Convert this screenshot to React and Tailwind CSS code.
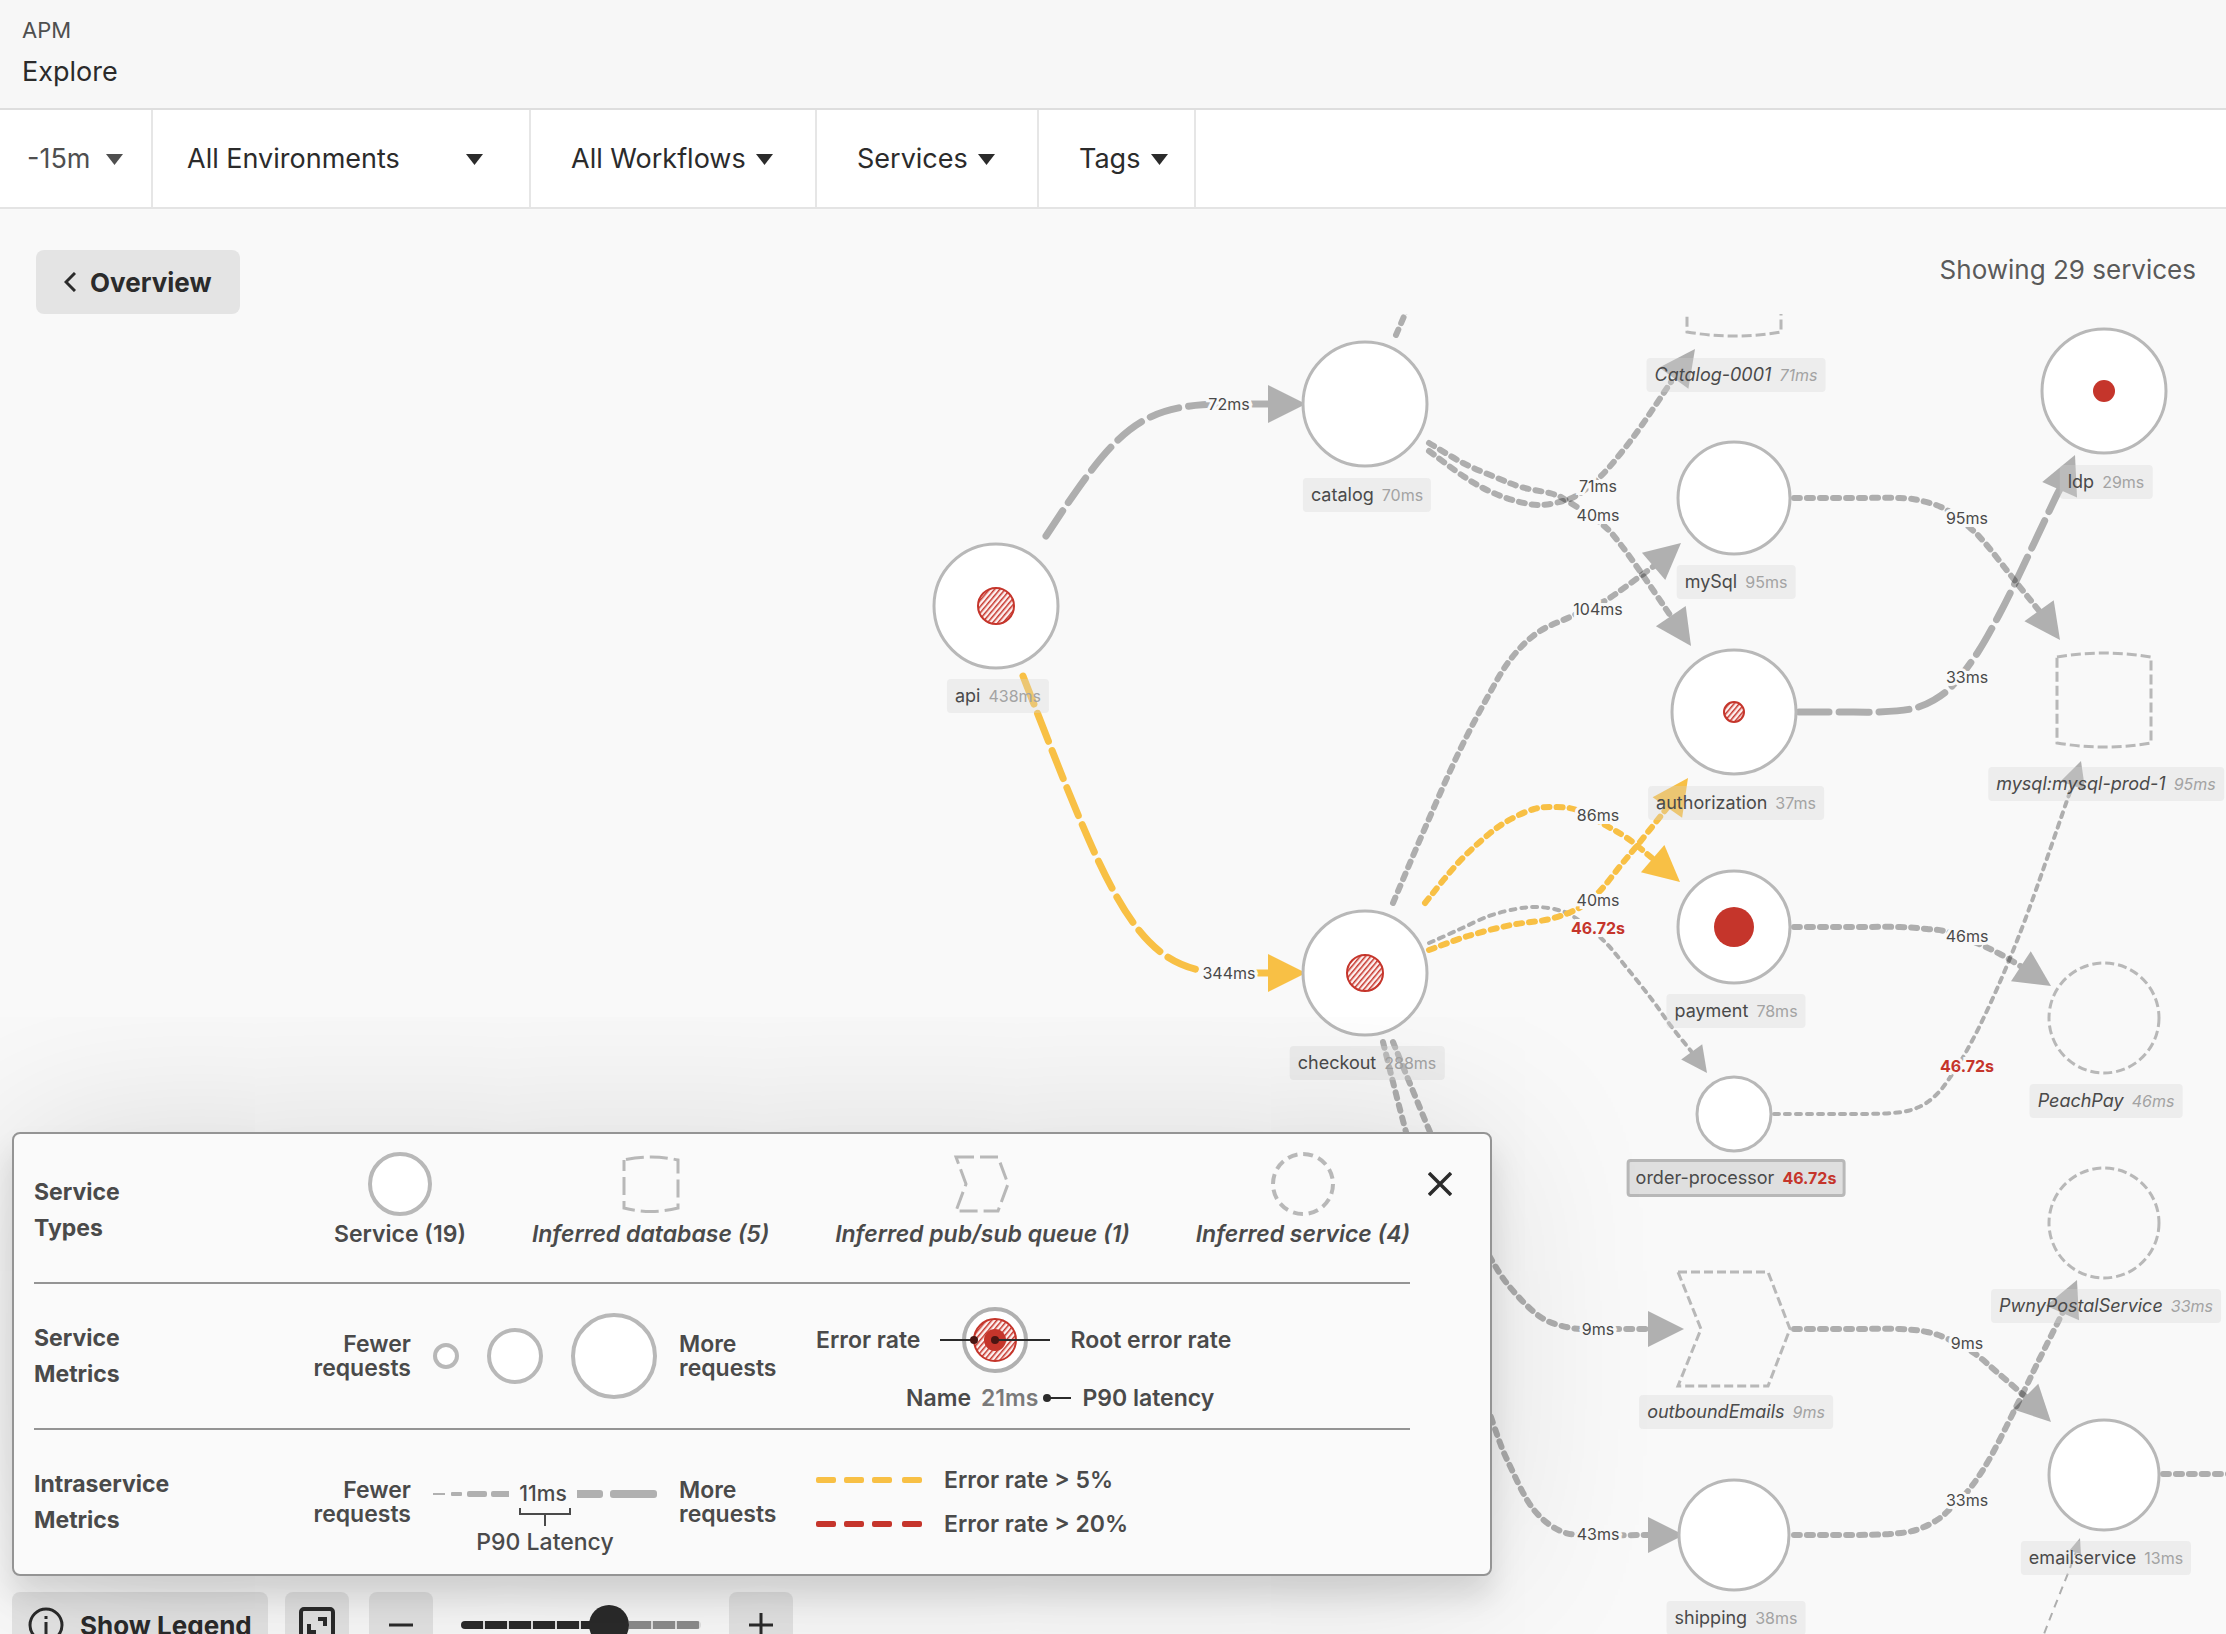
import React from "react";

const GRAY = "#b0b0b0";
const YELLOW = "#f8c045";
const RED = "#c5352b";

/* Offset that brings map coordinates into the visible part of the canvas. */
const PAN = { x: 0, y: -314 };

/* Line styles, from few requests to many. */
const WEIGHTS = {
  hair: { width: 2, dash: "8 6", cap: "butt", arrow: 15, half: 6 },
  thin: { width: 4, dash: "5 6", cap: "round", arrow: 26, half: 13 },
  mid: { width: 6, dash: "6 7", cap: "round", arrow: 36, half: 18 },
  wide: { width: 7, dash: "30 10", cap: "round", arrow: 38, half: 19 },
};

const EDGES = [
  { w: "wide", d: "M1046 536C1118 426 1140 404 1229 404", pts: [[1269, 404]], tip: [1306, 404], solid: 1251, label: "72ms", at: [1229, 404] },
  { w: "wide", c: YELLOW, d: "M1023 676C1112 905 1137 973 1229 973", pts: [[1269, 973]], tip: [1306, 973], solid: 1251, label: "344ms", at: [1229, 973] },
  { w: "mid", pts: [[1396, 335], [1405, 314], [1412, 296]] },
  { w: "mid", pts: [[1429, 451], [1463, 476], [1489, 491], [1516, 501], [1540, 505], [1563, 501], [1579, 494], [1600, 477], [1621, 453], [1642, 425], [1671, 382]], tip: [1695, 349], label: "71ms", at: [1598, 486] },
  { w: "mid", pts: [[1429, 443], [1463, 463], [1495, 477], [1521, 487], [1553, 494], [1569, 502], [1603, 525], [1621, 545], [1642, 574], [1670, 615]], tip: [1691, 646], label: "40ms", at: [1598, 515] },
  { w: "mid", pts: [[1393, 903], [1425, 828], [1458, 754], [1487, 698], [1510, 660], [1537, 633], [1570, 617], [1603, 602], [1628, 585], [1654, 566]], tip: [1681, 543], label: "104ms", at: [1598, 609] },
  { w: "mid", c: YELLOW, pts: [[1425, 903], [1458, 863], [1489, 834], [1511, 819], [1534, 809], [1553, 807], [1577, 810], [1605, 825], [1627, 838], [1652, 858]], tip: [1680, 882], label: "86ms", at: [1598, 815] },
  { w: "thin", pts: [[1429, 943], [1458, 930], [1489, 916], [1516, 909], [1537, 907], [1558, 910], [1574, 917], [1603, 940], [1627, 968], [1653, 1001], [1671, 1026], [1691, 1051]], tip: [1707, 1073], label: "46.72s", alert: true, at: [1598, 928] },
  { w: "mid", c: YELLOW, pts: [[1429, 950], [1468, 936], [1511, 925], [1550, 919], [1579, 908], [1599, 892], [1621, 865], [1640, 842], [1667, 808]], tip: [1688, 778], label: "40ms", at: [1598, 900] },
  { w: "mid", pts: [[1393, 1042], [1430, 1132], [1462, 1204], [1494, 1264], [1515, 1293], [1542, 1318], [1571, 1328], [1598, 1329], [1648, 1329]], tip: [1684, 1329], label: "9ms", at: [1598, 1329] },
  { w: "mid", pts: [[1383, 1042], [1406, 1132], [1450, 1290], [1493, 1423], [1511, 1468], [1534, 1510], [1563, 1532], [1598, 1535], [1648, 1535]], tip: [1684, 1535], label: "43ms", at: [1598, 1534] },
  { w: "mid", pts: [[1794, 498], [1850, 498], [1900, 498], [1922, 501], [1945, 509], [1969, 527], [1985, 543], [2016, 582], [2040, 612]], tip: [2060, 640], label: "95ms", at: [1967, 518] },
  { w: "wide", pts: [[1799, 712], [1840, 712], [1878, 712], [1911, 709], [1934, 700], [1954, 684], [1978, 652], [1999, 615], [2018, 577], [2053, 503], [2060, 489]], tip: [2075, 455], label: "33ms", at: [1967, 677] },
  { w: "mid", pts: [[1794, 927], [1850, 927], [1900, 927], [1927, 929], [1948, 932], [1979, 944], [2000, 954], [2022, 967]], tip: [2051, 986], label: "46ms", at: [1967, 936] },
  { w: "thin", pts: [[1774, 1114], [1840, 1114], [1893, 1113], [1919, 1107], [1937, 1094], [1951, 1076], [1966, 1052], [1985, 1015], [2008, 963], [2032, 901], [2070, 792], [2073, 785]], tip: [2081, 761], label: "46.72s", alert: true, at: [1967, 1066] },
  { w: "mid", pts: [[1794, 1329], [1850, 1329], [1900, 1329], [1927, 1332], [1948, 1339], [1974, 1353], [1998, 1373], [2027, 1398]], tip: [2051, 1422], label: "9ms", at: [1967, 1343] },
  { w: "mid", pts: [[1794, 1535], [1850, 1535], [1890, 1534], [1916, 1530], [1937, 1520], [1951, 1508], [1968, 1491], [1990, 1458], [2022, 1395], [2038, 1362], [2063, 1312]], tip: [2077, 1280], label: "33ms", at: [1967, 1500] },
  { w: "mid", pts: [[2163, 1474], [2300, 1474]] },
  { w: "hair", pts: [[2036, 1660], [2044, 1634], [2072, 1563], [2076, 1550]], tip: [2080, 1538] },
];

const NODES = [
  { name: "api", ms: "438ms", x: 996, y: 606, r: 62, kind: "service", hatch: 18, labelY: 679 },
  { name: "catalog", ms: "70ms", x: 1365, y: 404, r: 62, kind: "service", labelY: 478 },
  { name: "checkout", ms: "288ms", x: 1365, y: 973, r: 62, kind: "service", hatch: 18, labelY: 1046 },
  { name: "Catalog-0001", ms: "71ms", x: 1734, y: 289, kind: "database", labelY: 358 },
  { name: "mySql", ms: "95ms", x: 1734, y: 498, r: 56, kind: "service", labelY: 565 },
  { name: "authorization", ms: "37ms", x: 1734, y: 712, r: 62, kind: "service", hatch: 10, labelY: 786 },
  { name: "payment", ms: "78ms", x: 1734, y: 927, r: 56, kind: "service", dot: 20, labelY: 994 },
  { name: "order-processor", ms: "46.72s", x: 1734, y: 1114, r: 37, kind: "service", selected: true, labelY: 1159 },
  { name: "outboundEmails", ms: "9ms", x: 1734, y: 1329, kind: "queue", labelY: 1395 },
  { name: "shipping", ms: "38ms", x: 1734, y: 1535, r: 55, kind: "service", labelY: 1601 },
  { name: "ldp", ms: "29ms", x: 2104, y: 391, r: 62, kind: "service", dot: 11, labelY: 465 },
  { name: "mysql:mysql-prod-1", ms: "95ms", x: 2104, y: 700, kind: "database", labelY: 767 },
  { name: "PeachPay", ms: "46ms", x: 2104, y: 1018, r: 55, kind: "inferred", labelY: 1084 },
  { name: "PwnyPostalService", ms: "33ms", x: 2104, y: 1223, r: 55, kind: "inferred", labelY: 1289 },
  { name: "emailservice", ms: "13ms", x: 2104, y: 1475, r: 55, kind: "service", labelY: 1541 },
];

/* Smooth curve through a list of points. */
function curve(pts) {
  let d = `M${pts[0][0]} ${pts[0][1]}`;
  for (let i = 0; i < pts.length - 1; i++) {
    const p0 = pts[i - 1] || pts[i];
    const p1 = pts[i];
    const p2 = pts[i + 1];
    const p3 = pts[i + 2] || p2;
    d += `C${p1[0] + (p2[0] - p0[0]) / 6} ${p1[1] + (p2[1] - p0[1]) / 6} ${p2[0] - (p3[0] - p1[0]) / 6} ${p2[1] - (p3[1] - p1[1]) / 6} ${p2[0]} ${p2[1]}`;
  }
  return d;
}

function arrowHead(from, tip, length, half) {
  const dx = tip[0] - from[0];
  const dy = tip[1] - from[1];
  const n = Math.hypot(dx, dy);
  const ux = dx / n;
  const uy = dy / n;
  const bx = tip[0] - ux * length;
  const by = tip[1] - uy * length;
  return `M${tip[0]} ${tip[1]}L${bx - uy * half} ${by + ux * half}L${bx + uy * half} ${by - ux * half}Z`;
}

function Edge({ edge }) {
  const style = WEIGHTS[edge.w];
  const last = edge.pts[edge.pts.length - 1];
  return (
    <g>
      <path
        d={edge.d || curve(edge.pts)}
        fill="none"
        stroke={edge.c || "#000"}
        strokeOpacity={edge.c ? 1 : 0.3}
        strokeWidth={style.width}
        strokeDasharray={style.dash}
        strokeLinecap={style.cap}
      />
      {edge.solid && (
        <path d={`M${edge.solid} ${last[1]}H${last[0] + 1}`} stroke={edge.c || GRAY} strokeWidth="7" />
      )}
      {edge.tip && <path d={arrowHead(last, edge.tip, style.arrow, style.half)} fill={edge.c || GRAY} />}
    </g>
  );
}

function NodeShape({ node }) {
  const { x, y, r, kind } = node;
  if (kind === "database") {
    return (
      <path
        d={`M${x - 47} ${y - 43}Q${x} ${y - 51} ${x + 47} ${y - 43}V${y + 43}Q${x} ${y + 51} ${x - 47} ${y + 43}Z`}
        fill="none" stroke="#b8b8b8" strokeWidth="3" strokeDasharray="10 4"
      />
    );
  }
  if (kind === "queue") {
    return (
      <path
        d={`M${x - 56} ${y - 57}H${x + 34}L${x + 56} ${y}L${x + 34} ${y + 57}H${x - 56}L${x - 33} ${y}Z`}
        fill="none" stroke="#b8b8b8" strokeWidth="3" strokeDasharray="9 4"
      />
    );
  }
  return (
    <g>
      <circle
        cx={x} cy={y} r={r}
        fill={kind === "service" ? "#fff" : "none"}
        stroke="#b8b8b8" strokeWidth="3"
        strokeDasharray={kind === "inferred" ? "9 4" : undefined}
      />
      {node.hatch && <circle cx={x} cy={y} r={node.hatch} fill="url(#hatch)" stroke={RED} strokeWidth="2" />}
      {node.dot && <circle cx={x} cy={y} r={node.dot} fill={RED} />}
    </g>
  );
}

function NodeLabel({ node }) {
  const italic = node.kind !== "service";
  return (
    <div
      className={
        "absolute flex -translate-x-1/2 items-baseline gap-2 whitespace-nowrap rounded text-lg " +
        (node.selected
          ? "border-3 border-[#b8b8b8] bg-[#dfdfdf] px-1.5 leading-8 "
          : "bg-[#d2d2d2]/32 px-2 leading-[34px] ") +
        (italic ? "italic" : "")
      }
      style={{ left: node.x + 2, top: node.labelY }}
    >
      <span className="text-[#4a4a4a]">{node.name}</span>
      <span className={"text-base " + (node.selected ? "font-bold text-[#c5352b]" : "text-[#a3a3a3]")}>{node.ms}</span>
    </div>
  );
}

function ServiceMap() {
  return (
    <div className="absolute inset-0" style={{ transform: `translate(${PAN.x}px, ${PAN.y}px)` }}>
      <svg className="absolute inset-0 h-full w-full overflow-visible" role="img" aria-label="Service map">
        <defs>
          <pattern id="hatch" width="4" height="4" patternUnits="userSpaceOnUse" patternTransform="rotate(40)">
            <rect width="4" height="4" fill="#fdf0ef" />
            <rect width="1.5" height="4" fill={RED} />
          </pattern>
        </defs>
        {EDGES.map((edge, i) => (
          <Edge key={i} edge={edge} />
        ))}
        {NODES.map((node) => (
          <NodeShape key={node.name} node={node} />
        ))}
        {EDGES.filter((edge) => edge.label).map((edge, i) => (
          <text
            key={i}
            x={edge.at[0]}
            y={edge.at[1] + 6}
            textAnchor="middle"
            className="text-base"
            fontWeight={edge.alert ? 700 : 400}
            fill={edge.alert ? RED : "#4a4a4a"}
            stroke="#f9f9f9"
            strokeWidth="6"
            paintOrder="stroke"
          >
            {edge.label}
          </text>
        ))}
      </svg>
      {NODES.map((node) => (
        <NodeLabel key={node.name} node={node} />
      ))}
    </div>
  );
}

function Caret() {
  return (
    <svg width="17" height="11" viewBox="0 0 17 11" className="shrink-0" aria-hidden="true">
      <path d="M0 0H17L8.5 11Z" fill="currentColor" />
    </svg>
  );
}

function Filter({ label, name, className }) {
  return (
    <label className={"flex items-center gap-2.5 border-r-2 border-[#e6e6e6] pt-0.5 " + className}>
      <select aria-label={name} className="appearance-none bg-transparent text-[27px] outline-none">
        <option>{label}</option>
      </select>
      <Caret />
    </label>
  );
}

function Section({ title, children, last }) {
  return (
    <section className={"flex " + (last ? "h-36" : "h-[146px] border-b-2 border-[#949494]")}>
      <h2 className="flex w-[250px] shrink-0 items-center font-bold leading-9">
        <span className="w-36">{title}</span>
      </h2>
      {children}
    </section>
  );
}

function TypeItem({ label, italic, children }) {
  return (
    <li className={"flex flex-col items-center whitespace-nowrap " + (italic ? "italic" : "")}>
      <svg width="64" height="64" viewBox="0 0 64 64" fill="none" stroke="#b8b8b8" strokeWidth="3" aria-hidden="true">
        {children}
      </svg>
      <span>{label}</span>
    </li>
  );
}

function Legend() {
  return (
    <aside
      aria-label="Legend"
      className="relative z-10 w-[1480px] rounded-lg border-2 border-[#949494] bg-[#fafafa] pl-5 pr-20 pt-1 text-[23px] font-semibold text-[#4a4a4a] shadow-[0_20px_30px_rgba(0,0,0,0.12),0_0_170px_rgba(0,0,0,0.13)]"
    >
      <button type="button" aria-label="Close legend" className="absolute right-7.5 top-7.5 flex size-10 items-center justify-center text-[#2b2b2b]">
        <svg width="24" height="24" viewBox="0 0 24 24" stroke="currentColor" strokeWidth="3.5" aria-hidden="true">
          <path d="M1 1L23 23M23 1L1 23" />
        </svg>
      </button>

      <Section title="Service Types">
        <ul className="flex grow justify-between pl-[50px] pt-3.5 leading-9">
          <TypeItem label="Service (19)">
            <circle cx="32" cy="32" r="30" fill="#fff" strokeWidth="4" />
          </TypeItem>
          <TypeItem label="Inferred database (5)" italic>
            <path d="M5 8Q32 2 59 8V56Q32 63 5 56Z" strokeDasharray="18 6" strokeDashoffset="-2" />
          </TypeItem>
          <TypeItem label="Inferred pub/sub queue (1)" italic>
            <path d="M6 5H48L58 32L48 59H6L16 32Z" strokeDasharray="18 6" />
          </TypeItem>
          <TypeItem label="Inferred service (4)" italic>
            <circle cx="32" cy="32" r="30" strokeWidth="4" strokeDasharray="10 5.7" />
          </TypeItem>
        </ul>
      </Section>

      <Section title="Service Metrics">
        <div className="flex w-[532px] shrink-0 items-center gap-5 leading-6">
          <span className="w-[127px] text-right">Fewer requests</span>
          <svg width="228" height="90" viewBox="0 0 228 90" fill="#fff" stroke="#b8b8b8" strokeWidth="4" aria-hidden="true">
            <circle cx="15" cy="45" r="11" />
            <circle cx="84" cy="45" r="26" />
            <circle cx="183" cy="45" r="41" />
          </svg>
          <span className="w-28">More requests</span>
        </div>
        <div className="flex flex-col gap-2 pt-5.5 leading-8">
          <div className="flex items-center gap-5">
            <span>Error rate</span>
            <svg width="110" height="68" viewBox="0 0 110 68" aria-hidden="true">
              <circle cx="55" cy="34" r="31" fill="#fff" stroke={GRAY} strokeWidth="4" />
              <circle cx="55" cy="34" r="21" fill="url(#hatch)" stroke={RED} strokeWidth="2" />
              <circle cx="55" cy="34" r="11" fill={RED} />
              <path d="M0 34H34M55 34H110" stroke="#2b2b2b" strokeWidth="2" />
              <circle cx="34" cy="34" r="4" fill="#4b1512" />
              <circle cx="55" cy="34" r="4" fill="#4b1512" />
            </svg>
            <span>Root error rate</span>
          </div>
          <div className="flex items-center pl-[90px]">
            <span>Name</span>
            <span className="pl-2.5 text-[#7a7a7a]">21ms</span>
            <svg width="30" height="10" viewBox="0 0 30 10" className="ml-1" aria-hidden="true">
              <circle cx="5" cy="5" r="4" fill="#2b2b2b" />
              <path d="M5 5H29" stroke="#2b2b2b" strokeWidth="2" />
            </svg>
            <span className="pl-2.5">P90 latency</span>
          </div>
        </div>
      </Section>

      <Section title="Intraservice Metrics" last>
        <div className="flex w-[532px] shrink-0 items-center gap-5 leading-6">
          <span className="w-[127px] text-right">Fewer requests</span>
          <div className="flex w-[228px] flex-col items-center pt-8">
            <div className="flex items-center gap-2.5">
              <svg width="76" height="8" viewBox="0 0 76 8" fill={GRAY} aria-hidden="true">
                <rect x="0" y="3" width="12" height="2" />
                <rect x="18" y="2" width="11" height="4" rx="1" />
                <rect x="34" y="1" width="20" height="6" rx="2" />
                <path d="M60 1H76V7H60A2 2 0 0 1 58 5V3A2 2 0 0 1 60 1Z" />
              </svg>
              <span className="text-[21px] font-medium leading-6">11ms</span>
              <svg width="80" height="8" viewBox="0 0 80 8" fill={GRAY} aria-hidden="true">
                <path d="M0 0H23A3 3 0 0 1 26 3V5A3 3 0 0 1 23 8H0Z" />
                <rect x="33" y="0" width="47" height="8" rx="3" />
              </svg>
            </div>
            <svg width="52" height="20" viewBox="0 0 52 20" fill="none" stroke="#4a4a4a" strokeWidth="2" aria-hidden="true">
              <path d="M1 2V8H51V2M26 8V20" />
            </svg>
            <span className="pt-1 font-medium">P90 Latency</span>
          </div>
          <span className="w-28">More requests</span>
        </div>
        <ul className="flex flex-col gap-2 pt-8 leading-9">
          {[["#f8c045", "Error rate > 5%"], ["#c5352b", "Error rate > 20%"]].map(([color, label]) => (
            <li key={label} className="flex items-center gap-5.5">
              <svg width="106" height="6" viewBox="0 0 106 6" fill={color} aria-hidden="true">
                <rect x="0" width="20" height="6" rx="2" />
                <rect x="28" width="20" height="6" rx="2" />
                <rect x="56" width="20" height="6" rx="2" />
                <rect x="86" width="20" height="6" rx="2" />
              </svg>
              <span>{label}</span>
            </li>
          ))}
        </ul>
      </Section>
    </aside>
  );
}

const CONTROL = "flex h-[66px] items-center justify-center rounded-lg bg-[#e4e4e4] text-[#2b2b2b]";

function MapControls() {
  return (
    <div className="flex items-center">
      <button type="button" className={CONTROL + " gap-4 px-4 text-[26px] font-bold"}>
        <svg width="36" height="36" viewBox="0 0 36 36" fill="none" stroke="currentColor" strokeWidth="3" aria-hidden="true">
          <circle cx="18" cy="18" r="16" />
          <path d="M18 15V27M18 9V12" />
        </svg>
        Show Legend
      </button>
      <button type="button" aria-label="Fit to screen" className={CONTROL + " ml-[17px] w-16"}>
        <svg width="36" height="36" viewBox="0 0 36 36" fill="none" stroke="currentColor" strokeWidth="4" aria-hidden="true">
          <rect x="2" y="2" width="32" height="32" rx="3" />
          <path d="M19 12H26V19M10 17V25H17" />
        </svg>
      </button>
      <button type="button" aria-label="Zoom out" className={CONTROL + " ml-5 w-16"}>
        <svg width="24" height="24" viewBox="0 0 24 24" stroke="currentColor" strokeWidth="3" aria-hidden="true">
          <path d="M0 12H24" />
        </svg>
      </button>
      <input
        type="range"
        aria-label="Zoom"
        min="0"
        max="100"
        defaultValue="64"
        className="mx-7 h-2 w-60 appearance-none rounded-full bg-[repeating-linear-gradient(90deg,transparent_0_22px,#e0e0e0_22px_24px),linear-gradient(90deg,#2b2b2b_60%,#8c8c8c_60%)] [&::-webkit-slider-thumb]:size-10 [&::-webkit-slider-thumb]:appearance-none [&::-webkit-slider-thumb]:rounded-full [&::-webkit-slider-thumb]:bg-[#2b2b2b]"
      />
      <button type="button" aria-label="Zoom in" className={CONTROL + " w-16"}>
        <svg width="24" height="24" viewBox="0 0 24 24" stroke="currentColor" strokeWidth="3" aria-hidden="true">
          <path d="M0 12H24M12 0V24" />
        </svg>
      </button>
    </div>
  );
}

export default function App() {
  return (
    <div className="flex h-screen flex-col overflow-hidden bg-[#f9f9f9] font-['Inter','Liberation_Sans',sans-serif] text-[#2b2b2b]">
      <header className="border-b-2 border-[#dedede] bg-[#f7f7f7] px-[22px] pb-3.5 pt-2.5">
        <p className="text-[22px] leading-10 text-[#4f4f4f]">APM</p>
        <h1 className="text-[27px] leading-11">Explore</h1>
      </header>

      <nav aria-label="Filters" className="flex h-[99px] shrink-0 border-b-2 border-[#e4e4e4] bg-white">
        <Filter name="Time range" label="-15m" className="w-[153px] justify-between pl-[27px] pr-7 text-[#4f4f4f]" />
        <Filter name="Environment" label="All Environments" className="w-[378px] justify-between pl-[34px] pr-[46px]" />
        <Filter name="Workflow" label="All Workflows" className="w-[286px] pl-10" />
        <Filter name="Services" label="Services" className="w-[222px] pl-10" />
        <Filter name="Tags" label="Tags" className="w-[157px] pl-10" />
      </nav>

      <div className="flex h-[105px] shrink-0 items-end justify-between pl-9 pr-[30px]">
        <button type="button" className="flex h-16 items-center gap-3.5 rounded-lg bg-[#e4e4e4] px-7 text-[26px] font-bold">
          <svg width="12" height="20" viewBox="0 0 12 20" fill="none" stroke="currentColor" strokeWidth="3" aria-hidden="true">
            <path d="M11 1L2 10L11 19" />
          </svg>
          Overview
        </button>
        <p className="self-center pt-4 text-[26px] text-[#5a5a5a]">Showing 29 services</p>
      </div>

      <main className="relative grow overflow-hidden">
        <ServiceMap />
        <div className="absolute -bottom-6 left-3 flex flex-col gap-4">
          <Legend />
          <MapControls />
        </div>
      </main>
    </div>
  );
}
